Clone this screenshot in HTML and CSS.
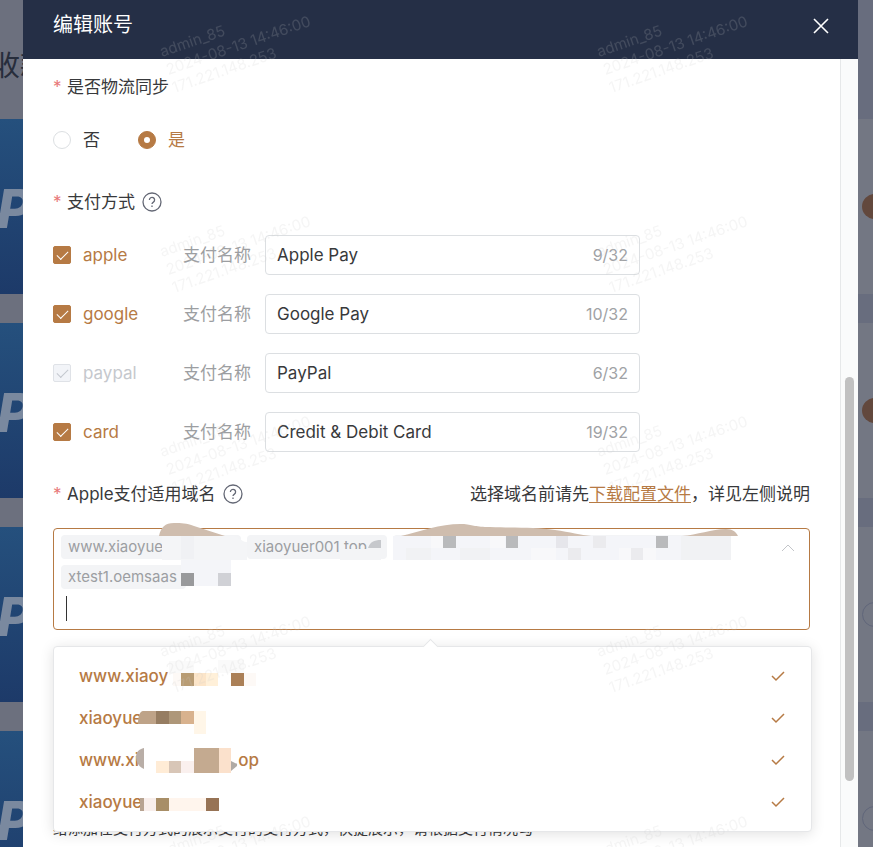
FILE: index.html
```html
<!DOCTYPE html>
<html lang="zh-CN">
<head>
    <meta charset="UTF-8">
    <meta name="viewport" content="width=device-width, initial-scale=1.0">
    <title>编辑账号</title>
    <link rel="stylesheet" href="styles.css">
</head>
<body>
    <div class="page">
        <div class="behind behind-left">
            <div class="behind-title">收款</div>
            <div class="pay-card">P</div>
            <div class="pay-card">P</div>
            <div class="pay-card">P</div>
            <div class="pay-card">P</div>
        </div>

        <main class="dialog">
            <header class="dialog-header">
                <h1>编辑账号</h1>
                <button class="close" type="button" aria-label="关闭">
                    <svg width="16" height="16" viewBox="0 0 16 16"><path d="M1 1L15 15M15 1L1 15"/></svg>
                </button>
            </header>

            <div class="dialog-body">
                <form class="form">
                    <div class="form-label"><span class="star">*</span>是否物流同步</div>
                    <div class="radios">
                        <label class="option"><input type="radio" name="sync"><span>否</span></label>
                        <label class="option"><input type="radio" name="sync" checked><span>是</span></label>
                    </div>

                    <div class="form-label">
                        <span class="star">*</span>支付方式
                        <svg class="help" viewBox="0 0 20 20"><circle cx="10" cy="10" r="9"/><path d="M7.4 8a2.6 2.6 0 1 1 4 2.1c-.9.6-1.4 1-1.4 2"/><path d="M10 13.6v1.3"/></svg>
                    </div>
                    <div class="methods">
                        <div class="method">
                            <label class="option"><input type="checkbox" checked><span>apple</span></label>
                            <label class="name-label" for="name-apple">支付名称</label>
                            <div class="field"><input id="name-apple" type="text" value="Apple Pay"><span>9/32</span></div>
                        </div>
                        <div class="method">
                            <label class="option"><input type="checkbox" checked><span>google</span></label>
                            <label class="name-label" for="name-google">支付名称</label>
                            <div class="field"><input id="name-google" type="text" value="Google Pay"><span>10/32</span></div>
                        </div>
                        <div class="method">
                            <label class="option"><input type="checkbox" checked disabled><span>paypal</span></label>
                            <label class="name-label" for="name-paypal">支付名称</label>
                            <div class="field"><input id="name-paypal" type="text" value="PayPal"><span>6/32</span></div>
                        </div>
                        <div class="method">
                            <label class="option"><input type="checkbox" checked><span>card</span></label>
                            <label class="name-label" for="name-card">支付名称</label>
                            <div class="field"><input id="name-card" type="text" value="Credit &amp; Debit Card"><span>19/32</span></div>
                        </div>
                    </div>

                    <div class="domain-head">
                        <label class="form-label" for="domain">
                            <span class="star">*</span>Apple支付适用域名
                            <svg class="help" viewBox="0 0 20 20"><circle cx="10" cy="10" r="9"/><path d="M7.4 8a2.6 2.6 0 1 1 4 2.1c-.9.6-1.4 1-1.4 2"/><path d="M10 13.6v1.3"/></svg>
                        </label>
                        <p>选择域名前请先<a href="#">下载配置文件</a>，详见左侧说明</p>
                    </div>

                    <div class="select">
                        <div class="tags">
                            <span class="tag tag-first">www.xiaoyuer</span>
                            <span class="tag tag-second">xiaoyuer001.top</span>
                            <span class="tag tag-third"></span>
                            <span class="tag tag-fourth">xtest1.oemsaas</span>
                        </div>
                        <div class="search"><input id="domain" type="text" autocomplete="off"></div>
                        <svg class="arrow" viewBox="0 0 14 8"><path d="M1 7L7 1L13 7"/></svg>

                        <!-- masked parts of the selected domains -->
                        <svg class="mask tags-mask" viewBox="53 522 757 70" width="757" height="70">
                            <path fill="#cfbdae" d="M159 536c2-9 6-13 15-13c8 0 12 0 20 3l31 10z"/>
                            <path fill="#cfbdae" d="M401 536c20-5 42-13 63-12c10 1 11 3 26 3c31 1 45 0 65 3c15 2 26 5 36 6z"/>
                            <path fill="#cfbdae" d="M682 536c15-1 30-7 44-7c7 0 10 3 12 7z"/>
                            <path fill="#f4f5f7" d="M162 536h70c8 0 8 6 15 6v18h-16v13h-50v-13h-19z"/>
                            <path fill="#f0f1f4" d="M181 536h13v23h-13z"/>
                            <path fill="#f3f4f6" d="M340 549h41v11h-41z"/>
                            <path fill="#c6c8cc" d="M368 548c2-6 6-8 13-8v8z"/>
                            <path fill="#f4f5f9" d="M181 560h50v26h-50zM393 536h338v24h-338z"/>
                            <path fill="#f1f2f4" d="M406 548h25v12h-25zM460 548h30v12h-30zM681 536h50v24h-50z"/>
                            <path fill="#f8f8fa" d="M431 536h12v12h-12zM490 536h15v12h-15zM531 548h25v12h-25zM619 548h37v12h-37z"/>
                            <path fill="#b9babc" d="M443 536h13v12h-13zM506 536h12v12h-12zM656 536h12v12h-12z"/>
                            <path fill="#e6e6eb" d="M556 536h12v12h-12z"/>
                            <path fill="#ebebee" d="M593 536h13v12h-13zM631 548h12v12h-12zM568 548h13v12h-13z"/>
                            <path fill="#999a9c" d="M181 573h13v13h-13z"/>
                            <path fill="#d0d1d6" d="M218 573h13v13h-13z"/>
                        </svg>

                        <div class="dropdown">
                            <ul>
                                <li>www.xiaoy<svg class="tick" viewBox="0 0 14 12"><path d="M1 6L5 10L13 2"/></svg></li>
                                <li>xiaoyue<svg class="tick" viewBox="0 0 14 12"><path d="M1 6L5 10L13 2"/></svg></li>
                                <li><span class="long-name">www.xi<span>.op</span></span><svg class="tick" viewBox="0 0 14 12"><path d="M1 6L5 10L13 2"/></svg></li>
                                <li>xiaoyue<svg class="tick" viewBox="0 0 14 12"><path d="M1 6L5 10L13 2"/></svg></li>
                            </ul>
                            <svg class="mask list-mask" viewBox="53 646 220 186" width="220" height="186">
                                <path fill="#fafafa" d="M169 661h25v12h-25zM218 660h26v13h-26z"/>
                                <path fill="#fdf9f6" d="M173 673h8v13h-8zM244 673h12v13h-12z"/>
                                <path fill="#b89c74" d="M181 673h13v13h-13z"/>
                                <path fill="#fce5c9" d="M194 673h12v13h-12z"/>
                                <path fill="#fff0d9" d="M206 673h12v13h-12z"/>
                                <path fill="#ab8057" d="M231 673h13v13h-13z"/>

                                <path fill="#bea388" d="M138 724c0-8 2-13 5-13h13v13h-18z"/>
                                <path fill="#967d62" d="M156 711h13v13h-13z"/>
                                <path fill="#ae9779" d="M169 711h12v13h-12z"/>
                                <path fill="#d8b28e" d="M181 711h13v13h-13z"/>
                                <path fill="#fff6e8" d="M194 711h12v23h-12z"/>

                                <path fill="#fff" d="M144 748h92v26h-92z"/>
                                <path fill="#b9aea7" d="M144 748v21c-5-2-8-7-8-12c0-5 3-8 8-9z"/>
                                <path fill="#ffecd6" d="M156 761h13v12h-13z"/>
                                <path fill="#d8c6b7" d="M169 761h12v12h-12z"/>
                                <path fill="#faf0ee" d="M181 761h13v12h-13z"/>
                                <path fill="#c4aa90" d="M194 748h25v25h-25z"/>
                                <path fill="#fbe1cc" d="M219 748h12v25h-12z"/>
                                <path fill="#afaaa5" d="M231 761l6 3v2l-6 5z"/>

                                <path fill="#b7a391" d="M140 798h4v13h-4z"/>
                                <path fill="#f8eeeb" d="M144 798h12v13h-12z"/>
                                <path fill="#a88e67" d="M156 798h13v13h-13z"/>
                                <path fill="#fff5ed" d="M169 798h37v13h-37z"/>
                                <path fill="#977355" d="M206 798h13v13h-13z"/>
                            </svg>
                        </div>
                    </div>

                    <p class="note">给添加在支付方式的展示支付的支付方式，快捷展示，请根据支付情况勾</p>
                </form>
                <div class="scrollbar"><div class="thumb"></div></div>
            </div>
        </main>

        <div class="behind behind-right">
            <div class="side-card"><i class="dot"></i></div>
            <div class="side-card"><i class="dot"></i></div>
            <div class="side-card"><i class="dot ring"></i></div>
            <div class="side-card"><i class="dot ring"></i></div>
        </div>

        <svg class="watermark" width="100%" height="100%" aria-hidden="true">
            <defs>
                <pattern id="wm" width="437" height="200" patternUnits="userSpaceOnUse">
                    <g transform="translate(162 57) rotate(-19)">
                        <text x="0" y="0">admin_85</text>
                        <text x="0" y="19">2024-08-13 14:46:00</text>
                        <text x="0" y="38">171.221.148.253</text>
                    </g>
                </pattern>
            </defs>
            <rect width="100%" height="100%" fill="url(#wm)"/>
        </svg>
    </div>
</body>
</html>
```

FILE: styles.css
```css
* {
    box-sizing: border-box;
}
body {
    margin: 0;
    font-family: Inter, "Noto Sans CJK SC", sans-serif;
    font-size: 17px;
    line-height: 24px;
    color: #38393b;
}
h1, p, ul {
    margin: 0;
    padding: 0;
    font-weight: 400;
}
.page {
    position: relative;
    display: flex;
    height: 100vh;
    overflow: hidden;
    background: #6c707e;
}

/* page behind the dialog */
.behind {
    display: flex;
    flex-direction: column;
    gap: 29px;
    overflow: hidden;
}
.behind-left {
    width: 23px;
}
.behind-title {
    flex: none;
    height: 90px;
    margin-left: -8px;
    padding-top: 46px;
    font-size: 28px;
    line-height: 40px;
    white-space: nowrap;
    color: #272d3b;
}
.pay-card {
    flex: none;
    height: 175px;
    padding-top: 60px;
    background: linear-gradient(#25507d, #1d3a69);
    color: #7a899f;
    font-size: 54px;
    line-height: 60px;
    font-weight: 800;
    font-style: italic;
    text-indent: -3px;
}
.behind-right {
    width: 15px;
    padding-top: 119px;
    background: #686d7e;
}
.side-card {
    flex: none;
    display: flex;
    align-items: center;
    height: 175px;
    padding-left: 4px;
    background: #737783;
}
.dot {
    flex: none;
    width: 25px;
    height: 25px;
    border-radius: 50%;
    background: #62483d;
}
.ring {
    background: none;
    border: 1px solid #60667a;
}

/* dialog */
.dialog {
    flex: 1;
    display: flex;
    flex-direction: column;
    min-width: 0;
    background: #fff;
}
.dialog-header {
    flex: none;
    display: flex;
    align-items: center;
    justify-content: space-between;
    height: 59px;
    padding: 0 29px 10px 30px;
    background: #252f46;
    color: #fff;
}
.dialog-header h1 {
    font-size: 20px;
}
.close {
    display: flex;
    margin-top: 2px;
    padding: 0;
    border: 0;
    background: none;
    cursor: pointer;
}
.close svg {
    fill: none;
    stroke: #fff;
    stroke-width: 1.6;
}
.dialog-body {
    flex: 1;
    display: flex;
    min-height: 0;
}
.form {
    flex: 1;
    min-width: 0;
    padding: 16px 30px 0;
}
.scrollbar {
    width: 18px;
    padding: 318px 4px 0;
    border-left: 1px solid #e6e8e9;
    background: #fafbfb;
}
.thumb {
    height: 405px;
    max-height: 86%;
    border-radius: 5px;
    background: #c1c1c1;
}

.form-label {
    display: flex;
    align-items: center;
}
.star {
    width: 14px;
    color: #e87878;
}
.help {
    width: 20px;
    height: 20px;
    margin-left: 7px;
    fill: none;
    stroke: #646875;
    stroke-width: 1.3;
}
.radios {
    display: flex;
    gap: 38px;
    margin: 29px 0 38px;
}
.option {
    display: flex;
    align-items: center;
    gap: 12px;
    cursor: pointer;
}
.option input {
    display: grid;
    place-items: center;
    appearance: none;
    width: 18px;
    height: 18px;
    margin: 0;
    border: 1px solid #dcdfe2;
    border-radius: 2px;
}
.option input[type="radio"] {
    border-radius: 50%;
}
.option input:checked {
    border-color: #b67a44;
    background: #b67a44;
}
.option input[type="radio"]:checked::after {
    content: "";
    width: 6px;
    height: 6px;
    border-radius: 50%;
    background: #fff;
}
.option input[type="checkbox"]::after {
    content: "";
    width: 10px;
    height: 5px;
    margin-bottom: 3px;
    border: solid #fff;
    border-width: 0 0 1px 1px;
    transform: rotate(-45deg);
}
.option input:checked + span {
    color: #b67a44;
}
.option input:disabled {
    border-color: #dfe2e7;
    background: #f2f4f8;
}
.option input:disabled::after {
    border-color: #c3c7ce;
}
.option input:disabled + span {
    color: #c5c8cd;
}

.methods {
    display: flex;
    flex-direction: column;
    gap: 19px;
    margin: 21px 0 30px;
}
.method {
    display: flex;
    align-items: center;
}
.method .option {
    width: 130px;
}
.name-label {
    width: 82px;
    color: #9c9ea1;
}
.field {
    flex: 0 1 375px;
    display: flex;
    align-items: center;
    height: 40px;
    padding: 0 11px;
    border: 1px solid #dcdfe2;
    border-radius: 4px;
    color: #a0a2a5;
    font-size: 16px;
}
.field input {
    flex: 1;
    min-width: 0;
    padding: 0;
    border: 0;
    outline: 0;
    background: none;
    font: inherit;
    font-size: 17px;
    color: #38393b;
}

.domain-head {
    display: flex;
    justify-content: space-between;
    margin-bottom: 22px;
}
.domain-head a {
    color: #b67a44;
    text-underline-offset: 2px;
}
.select {
    position: relative;
    padding: 6px 7px;
    border: 1px solid #b67a44;
    border-radius: 4px;
}
.tags {
    display: flex;
    flex-wrap: wrap;
    gap: 6px;
    padding-right: 60px;
}
.tag {
    height: 24px;
    padding: 0 7px;
    border-radius: 4px;
    background: #f3f4f6;
    color: #9c9ea2;
    font-size: 15px;
}
.tag-first {
    width: 180px;
}
.tag-second {
    width: 140px;
}
.tag-third {
    width: 337px;
}
.tag-fourth {
    width: 125px;
}
.search {
    display: flex;
    height: 34px;
    padding: 7px 5px 2px;
}
.search input {
    width: 100%;
    padding: 0;
    border: 0;
    border-left: 1px solid #333;
    outline: 0;
    background: none;
    font: inherit;
}
.arrow {
    position: absolute;
    top: 15px;
    right: 14px;
    width: 14px;
    height: 8px;
    fill: none;
    stroke: #c3c5c9;
}
.mask {
    position: absolute;
    left: -1px;
    pointer-events: none;
}
.tags-mask {
    top: -7px;
}

.dropdown {
    position: absolute;
    top: 117px;
    left: -1px;
    right: -3px;
    padding: 8px 26px 8px 25px;
    border: 1px solid #e6e7e9;
    border-radius: 4px;
    background: #fff;
    box-shadow: 0 2px 14px rgba(0, 0, 0, 0.12);
}
.dropdown::before {
    content: "";
    position: absolute;
    top: -6px;
    left: 49%;
    width: 10px;
    height: 10px;
    border: solid #e6e7e9;
    border-width: 1px 0 0 1px;
    background: #fff;
    transform: rotate(45deg);
}
.dropdown ul {
    list-style: none;
}
.dropdown li {
    display: flex;
    align-items: center;
    justify-content: space-between;
    height: 42px;
    color: #b67a44;
    font-weight: 500;
}
.long-name {
    display: flex;
    justify-content: space-between;
    width: 180px;
}
.list-mask {
    top: -1px;
}
.tick {
    width: 14px;
    height: 12px;
    fill: none;
    stroke: #b67a44;
    stroke-width: 1.5;
}
.note {
    margin-top: 187px;
    font-size: 15px;
    white-space: nowrap;
}

.watermark {
    position: absolute;
    inset: 0;
    pointer-events: none;
}
.watermark text {
    font-size: 15px;
    fill: rgba(200, 200, 200, 0.18);
}
```
